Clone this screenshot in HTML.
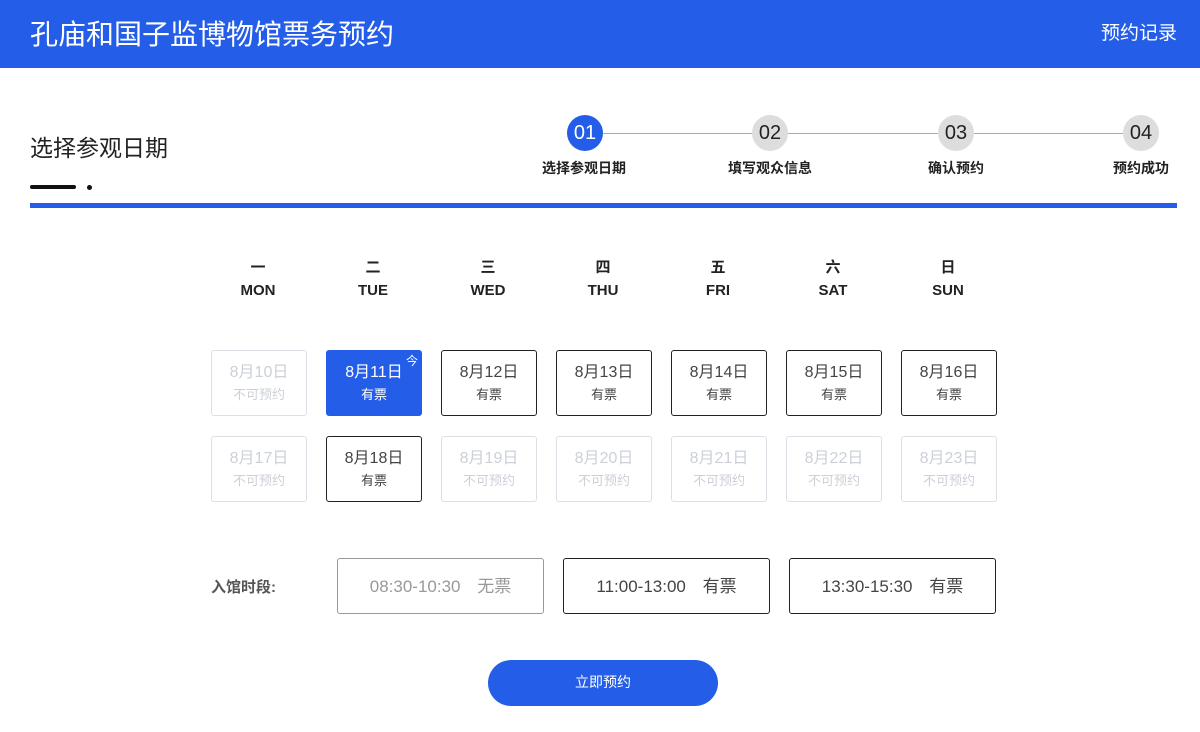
<!DOCTYPE html><html><head><meta charset="utf-8"><style>
*{margin:0;padding:0;box-sizing:border-box}
body{width:1200px;height:732px;background:#fff;font-family:"Liberation Sans","Noto Sans CJK SC",sans-serif;position:relative;overflow:hidden;color:#222}
.a{position:absolute}
.hd{left:0;top:0;width:1200px;height:68px;background:#245ee8}
.step{width:36px;height:36px;border-radius:50%;background:#ddd;color:#222;font-size:20px;line-height:36px;text-align:center}
.sl{height:1px;background:#aaa;top:133px}
.lb{font-size:14px;font-weight:bold;top:158px;width:120px;text-align:center}
.wd{width:96px;text-align:center;font-weight:bold;font-size:15px;color:#222;line-height:23px}
.c{width:96px;height:66px;border:1px solid #222;border-radius:3px;text-align:center;color:#444}
.c b{display:block;font-weight:normal;font-size:16px;margin-top:7px}
.c i{display:block;font-style:normal;font-size:13px;margin-top:2px}
.c.d{border-color:#dcdfe6;color:#ccd0d8}
.c.s{background:#245ee8;border-color:#245ee8;color:#fff}
.t{width:207px;height:56px;border:1px solid #222;border-radius:3px;font-size:17px;line-height:56px;text-align:center;color:#444;word-spacing:12px}
</style></head><body>
<div class="a hd"></div>
<div class="a" style="left:30px;top:13px;font-size:28px;color:#fff">孔庙和国子监博物馆票务预约</div>
<div class="a" style="right:23px;top:18px;font-size:19px;color:#fff">预约记录</div>
<div class="a" style="left:30px;top:129px;font-size:23px;color:#222">选择参观日期</div>
<div class="a" style="left:30px;top:185px;width:46px;height:4px;background:#111;border-radius:2px"></div>
<div class="a" style="left:87px;top:185px;width:5px;height:5px;background:#111;border-radius:50%"></div>
<div class="a" style="left:30px;top:203px;width:1147px;height:5px;background:#245ee8"></div>
<div class="a sl" style="left:603px;width:149px"></div>
<div class="a sl" style="left:788px;width:150px"></div>
<div class="a sl" style="left:974px;width:149px"></div>
<div class="a step" style="left:567px;top:115px;background:#245ee8;color:#fff">01</div>
<div class="a step" style="left:752px;top:115px">02</div>
<div class="a step" style="left:938px;top:115px">03</div>
<div class="a step" style="left:1123px;top:115px">04</div>
<div class="a lb" style="left:524px">选择参观日期</div>
<div class="a lb" style="left:710px">填写观众信息</div>
<div class="a lb" style="left:896px">确认预约</div>
<div class="a lb" style="left:1081px">预约成功</div>
<div class="a wd" style="left:210px;top:256px">一<br>MON</div>
<div class="a wd" style="left:325px;top:256px">二<br>TUE</div>
<div class="a wd" style="left:440px;top:256px">三<br>WED</div>
<div class="a wd" style="left:555px;top:256px">四<br>THU</div>
<div class="a wd" style="left:670px;top:256px">五<br>FRI</div>
<div class="a wd" style="left:785px;top:256px">六<br>SAT</div>
<div class="a wd" style="left:900px;top:256px">日<br>SUN</div>
<div class="a c d" style="left:211px;top:350px"><b>8月10日</b><i>不可预约</i></div>
<div class="a c s" style="left:326px;top:350px"><b>8月11日</b><i>有票</i><span class="a" style="right:3px;top:1px;font-size:12px">今</span></div>
<div class="a c" style="left:441px;top:350px"><b>8月12日</b><i>有票</i></div>
<div class="a c" style="left:556px;top:350px"><b>8月13日</b><i>有票</i></div>
<div class="a c" style="left:671px;top:350px"><b>8月14日</b><i>有票</i></div>
<div class="a c" style="left:786px;top:350px"><b>8月15日</b><i>有票</i></div>
<div class="a c" style="left:901px;top:350px"><b>8月16日</b><i>有票</i></div>
<div class="a c d" style="left:211px;top:436px"><b>8月17日</b><i>不可预约</i></div>
<div class="a c" style="left:326px;top:436px"><b>8月18日</b><i>有票</i></div>
<div class="a c d" style="left:441px;top:436px"><b>8月19日</b><i>不可预约</i></div>
<div class="a c d" style="left:556px;top:436px"><b>8月20日</b><i>不可预约</i></div>
<div class="a c d" style="left:671px;top:436px"><b>8月21日</b><i>不可预约</i></div>
<div class="a c d" style="left:786px;top:436px"><b>8月22日</b><i>不可预约</i></div>
<div class="a c d" style="left:901px;top:436px"><b>8月23日</b><i>不可预约</i></div>
<div class="a" style="left:211px;top:576px;font-size:15px;font-weight:bold;color:#555">入馆时段:</div>
<div class="a t" style="left:337px;top:558px;border-color:#999;color:#999">08:30-10:30 无票</div>
<div class="a t" style="left:563px;top:558px">11:00-13:00 有票</div>
<div class="a t" style="left:789px;top:558px">13:30-15:30 有票</div>
<div class="a" style="left:488px;top:660px;width:230px;height:46px;border-radius:23px;background:#245ee8;color:#fff;font-size:14px;line-height:44px;text-align:center">立即预约</div>
</body></html>
